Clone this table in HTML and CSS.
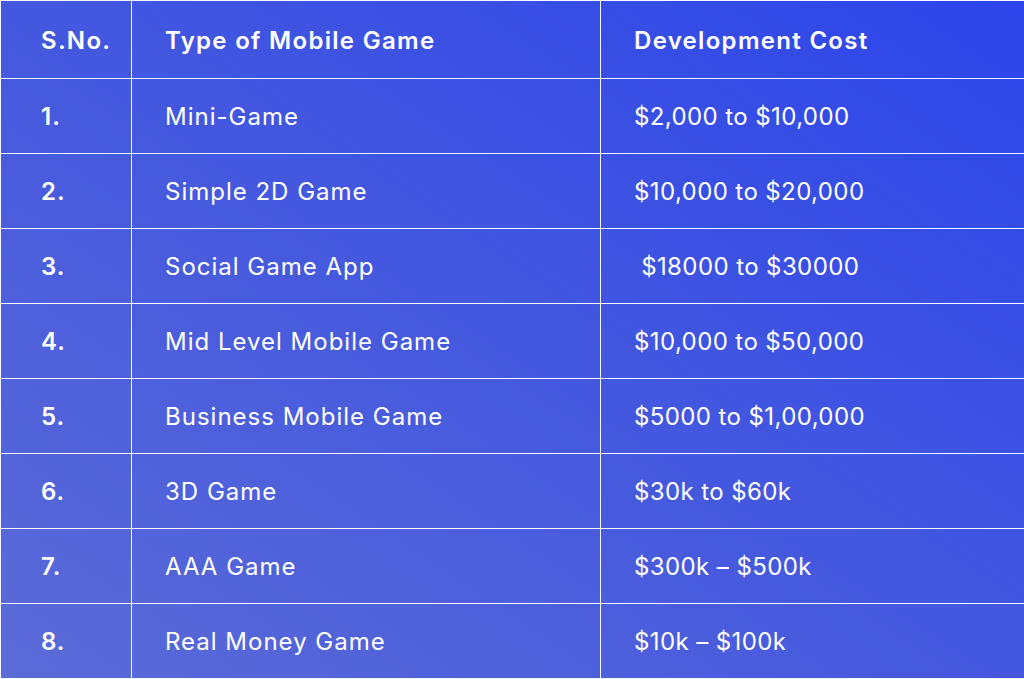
FILE: index.html
```html
<!DOCTYPE html>
<html lang="en">
<head>
<meta charset="utf-8">
<title>Mobile Game Development Cost</title>
<link rel="stylesheet" href="styles.css">
</head>
<body>
<table class="cost-table">
  <colgroup>
    <col class="col-no">
    <col class="col-type">
    <col class="col-cost">
  </colgroup>
  <thead>
    <tr>
      <th class="c-no">S.No.</th>
      <th class="c-type">Type of Mobile Game</th>
      <th class="c-cost">Development Cost</th>
    </tr>
  </thead>
  <tbody>
    <tr><td class="c-no">1.</td><td class="c-type">Mini-Game</td><td class="c-cost">$2,000 to $10,000</td></tr>
    <tr><td class="c-no">2.</td><td class="c-type">Simple 2D Game</td><td class="c-cost">$10,000 to $20,000</td></tr>
    <tr><td class="c-no">3.</td><td class="c-type">Social Game App</td><td class="c-cost">&nbsp;$18000 to $30000</td></tr>
    <tr><td class="c-no">4.</td><td class="c-type">Mid Level Mobile Game</td><td class="c-cost">$10,000 to $50,000</td></tr>
    <tr><td class="c-no">5.</td><td class="c-type">Business Mobile Game</td><td class="c-cost">$5000 to $1,00,000</td></tr>
    <tr><td class="c-no">6.</td><td class="c-type">3D Game</td><td class="c-cost">$30k to $60k</td></tr>
    <tr><td class="c-no">7.</td><td class="c-type">AAA Game</td><td class="c-cost">$300k – $500k</td></tr>
    <tr><td class="c-no">8.</td><td class="c-type">Real Money Game</td><td class="c-cost">$10k – $100k</td></tr>
  </tbody>
</table>
</body>
</html>
```

FILE: styles.css
```css
html, body {
  margin: 0;
  padding: 0;
  background: #ffffff;
}

.cost-table {
  width: 1024px;
  border-collapse: collapse;
  table-layout: fixed;
  background: linear-gradient(to top right, #5b6bd7 0%, #4458df 50%, #2c45ea 100%);
  font-family: Inter, "Open Sans", sans-serif;
  color: #ffffff;
}

.col-no { width: 131px; }
.col-type { width: 469px; }
.col-cost { width: 424px; }

.cost-table th,
.cost-table td {
  border: 1px solid rgba(255, 255, 255, 0.95);
  text-align: left;
  vertical-align: middle;
  padding: 2px 10px 0 33px;
  font-size: 24px;
  line-height: 28px;
  white-space: nowrap;
  box-sizing: border-box;
}

.cost-table th:last-child,
.cost-table td:last-child {
  border-right: none;
}

.cost-table thead th {
  height: 78px;
  font-weight: 600;
  letter-spacing: 1.3px;
}

.cost-table tbody td {
  height: 75px;
  font-weight: 400;
  letter-spacing: 1px;
}

.cost-table tbody td.c-cost {
  letter-spacing: 0.4px;
}

.cost-table tbody td.c-no {
  font-weight: 600;
  letter-spacing: 1px;
}

.cost-table .c-no {
  padding-left: 40px;
}
```
